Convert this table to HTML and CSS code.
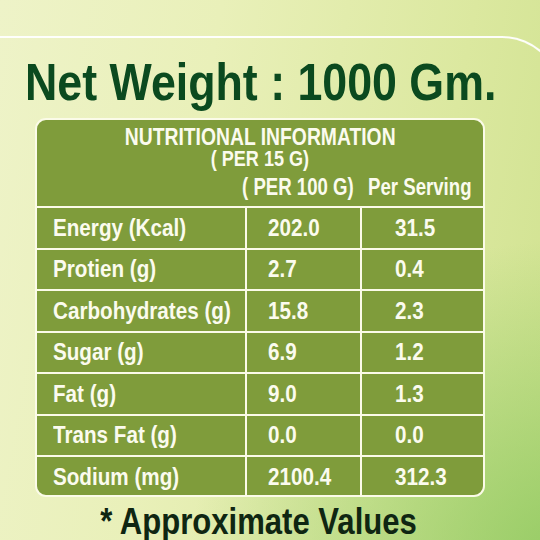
FILE: index.html
```html
<!DOCTYPE html>
<html>
<head>
<meta charset="utf-8">
<link rel="stylesheet" href="styles.css">
</head>
<body>
<div class="page">
  <h1 class="title"><span class="sq">Net Weight : 1000 Gm.</span></h1>
  <div class="panel">
    <div class="head">
      <div class="head-title"><span class="sq">NUTRITIONAL INFORMATION</span></div>
      <div class="head-sub"><span class="sq">( PER 15 G)</span></div>
      <div class="head-cols"><span class="sq hc1">( PER 100 G)</span><span class="sq hc2">Per Serving</span></div>
    </div>
    <div class="row"><div class="c1"><span class="sq">Energy (Kcal)</span></div><div class="c2"><span class="sq">202.0</span></div><div class="c3"><span class="sq">31.5</span></div></div>
    <div class="row"><div class="c1"><span class="sq">Protien (g)</span></div><div class="c2"><span class="sq">2.7</span></div><div class="c3"><span class="sq">0.4</span></div></div>
    <div class="row"><div class="c1"><span class="sq">Carbohydrates (g)</span></div><div class="c2"><span class="sq">15.8</span></div><div class="c3"><span class="sq">2.3</span></div></div>
    <div class="row"><div class="c1"><span class="sq">Sugar (g)</span></div><div class="c2"><span class="sq">6.9</span></div><div class="c3"><span class="sq">1.2</span></div></div>
    <div class="row"><div class="c1"><span class="sq">Fat (g)</span></div><div class="c2"><span class="sq">9.0</span></div><div class="c3"><span class="sq">1.3</span></div></div>
    <div class="row"><div class="c1"><span class="sq">Trans Fat (g)</span></div><div class="c2"><span class="sq">0.0</span></div><div class="c3"><span class="sq">0.0</span></div></div>
    <div class="row"><div class="c1"><span class="sq">Sodium (mg)</span></div><div class="c2"><span class="sq">2100.4</span></div><div class="c3"><span class="sq">312.3</span></div></div>
  </div>
  <div class="note"><span class="sq">* Approximate Values</span></div>
</div>
</body>
</html>
```
FILE: styles.css
```css
html, body { margin: 0; padding: 0; }
body { width: 540px; height: 540px; overflow: hidden; }
.page {
  position: relative;
  width: 540px;
  height: 540px;
  overflow: hidden;
  font-family: "Liberation Sans", Arial, sans-serif;
  font-weight: bold;
  background:
    radial-gradient(ellipse 380px 320px at 570px 560px, rgba(135,198,90,0.8), rgba(135,198,90,0) 100%),
    linear-gradient(100deg, #eef3c8 0%, #e9f0b9 35%, #dbe89f 75%, #d0e290 100%);
  display: flex;
  flex-direction: column;
}
.page::before {
  content: "";
  position: absolute;
  top: 36px;
  left: -4px;
  width: 564px;
  height: 120px;
  border-top: 2px solid rgba(255,255,255,0.95);
  border-right: 2px solid rgba(255,255,255,0.95);
  border-top-right-radius: 60px 60px;
}
.sq {
  display: inline-block;
  white-space: nowrap;
  transform-origin: left center;
  transform: scaleX(0.86);
}
.title {
  margin: 56px 0 0 25px;
  font-size: 52px;
  line-height: 52px;
  color: #0b4a1f;
  font-weight: bold;
  white-space: nowrap;
}
.title .sq { transform: scaleX(0.86); }
.panel {
  margin: 10px 0 0 35px;
  width: 446px;
  border: 2px solid #fbfbe8;
  border-radius: 11px;
  background: #7f9c3b;
  color: #fbfbee;
  overflow: hidden;
}
.head {
  height: 88px;
  border-bottom: 2px solid #fbfbe8;
  box-sizing: border-box;
  display: flex;
  flex-direction: column;
  align-items: center;
  padding-top: 7px;
}
.head-title { font-size: 23px; line-height: 21px; white-space: nowrap; }
.head-title .sq { transform-origin: center; transform: scaleX(0.84); }
.head-sub { font-size: 22px; line-height: 21px; white-space: nowrap; }
.head-sub .sq { transform-origin: center; transform: scaleX(0.82); }
.head-cols {
  align-self: stretch;
  display: grid;
  grid-template-columns: 205px 126px 1fr;
  font-size: 23px;
  line-height: 22px;
  margin-top: 7px;
}
.head-cols .hc1 { grid-column: 2 / 3; transform: scaleX(0.81); }
.head-cols .hc2 { grid-column: 3 / 4; transform: scaleX(0.81); }
.row {
  display: grid;
  grid-template-columns: 210px 115px 1fr;
  height: 41.5px;
  border-bottom: 2px solid #fbfbe8;
  box-sizing: border-box;
  font-size: 24px;
}
.row:last-child { border-bottom: none; height: 40px; }
.row > div { display: flex; align-items: center; white-space: nowrap; }
.c1 { padding-left: 16px; border-right: 2px solid #fbfbe8; }
.c2 { padding-left: 21px; border-right: 2px solid #fbfbe8; }
.c3 { padding-left: 33px; }
.note {
  text-align: center;
  margin: 6px 0 0 0;
  padding-right: 24px;
  font-size: 37px;
  line-height: 37px;
  color: #0f2612;
  white-space: nowrap;
}
.note .sq { transform-origin: center; transform: scaleX(0.84); }
```
